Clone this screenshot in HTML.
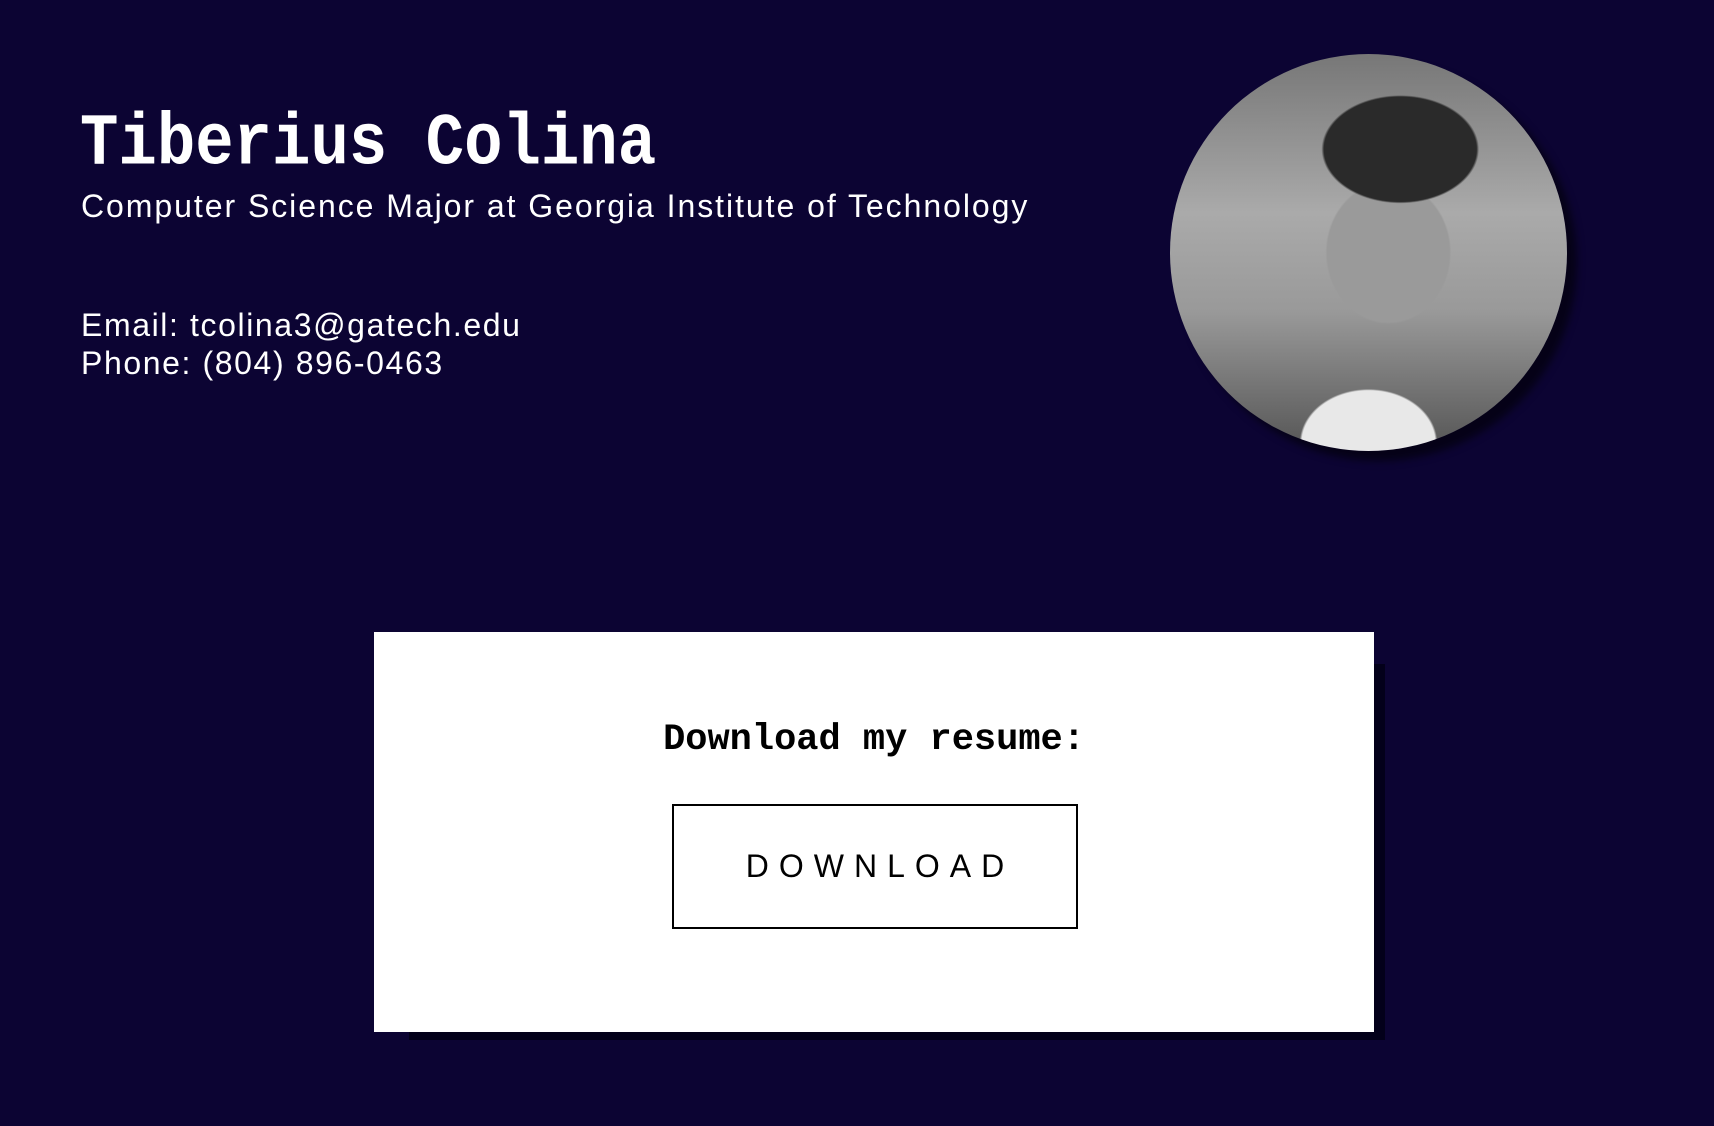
<!DOCTYPE html>
<html><head><meta charset="utf-8"><style>
html,body{margin:0;padding:0}
body{width:1714px;height:1126px;background:#0c0433;position:relative;overflow:hidden;font-family:"Liberation Sans",sans-serif;color:#fff}
.abs{position:absolute;white-space:nowrap}
.name{left:80px;top:105px;font-family:"Liberation Mono",monospace;font-weight:bold;font-size:64px;line-height:80px;transform:scaleY(1.15);transform-origin:left center}
.sub{left:81px;top:186px;font-size:32px;line-height:40px;letter-spacing:1.95px}
.contact{left:81px;top:306px;font-size:32px;line-height:38px;letter-spacing:1.6px}
.photo{left:1170px;top:54px;width:397px;height:397px;border-radius:50%;box-shadow:10px 10px 8px rgba(0,0,0,0.55);
background:radial-gradient(ellipse 32% 22% at 58% 24%,#2a2a2a 60%,transparent 62%),radial-gradient(ellipse 22% 25% at 55% 50%,#9a9a9a 70%,transparent 72%),radial-gradient(ellipse 28% 22% at 50% 98%,#e8e8e8 60%,transparent 62%),linear-gradient(180deg,#777 0%,#aaa 40%,#999 65%,#555 100%);overflow:hidden}
.shadow{left:409px;top:664px;width:976px;height:376px;background:#03001a}
.card{left:374px;top:632px;width:1000px;height:400px;background:#fff}
.dl{left:374px;width:1000px;top:715px;text-align:center;color:#000;font-family:"Liberation Mono",monospace;font-weight:bold;font-size:37px;line-height:50px}
.btn{left:672px;top:804px;width:402px;height:121px;border:2px solid #000;color:#000;display:flex;align-items:center;justify-content:center;font-size:32px;letter-spacing:10px;text-indent:10px}
</style></head><body>
<div class="abs name">Tiberius Colina</div>
<div class="abs sub">Computer Science Major at Georgia Institute of Technology</div>
<div class="abs contact">Email: tcolina3@gatech.edu<br>Phone: (804) 896-0463</div>
<div class="abs photo"></div>
<div class="abs shadow"></div>
<div class="abs card"></div>
<div class="abs dl">Download my resume:</div>
<div class="abs btn">DOWNLOAD</div>
</body></html>
